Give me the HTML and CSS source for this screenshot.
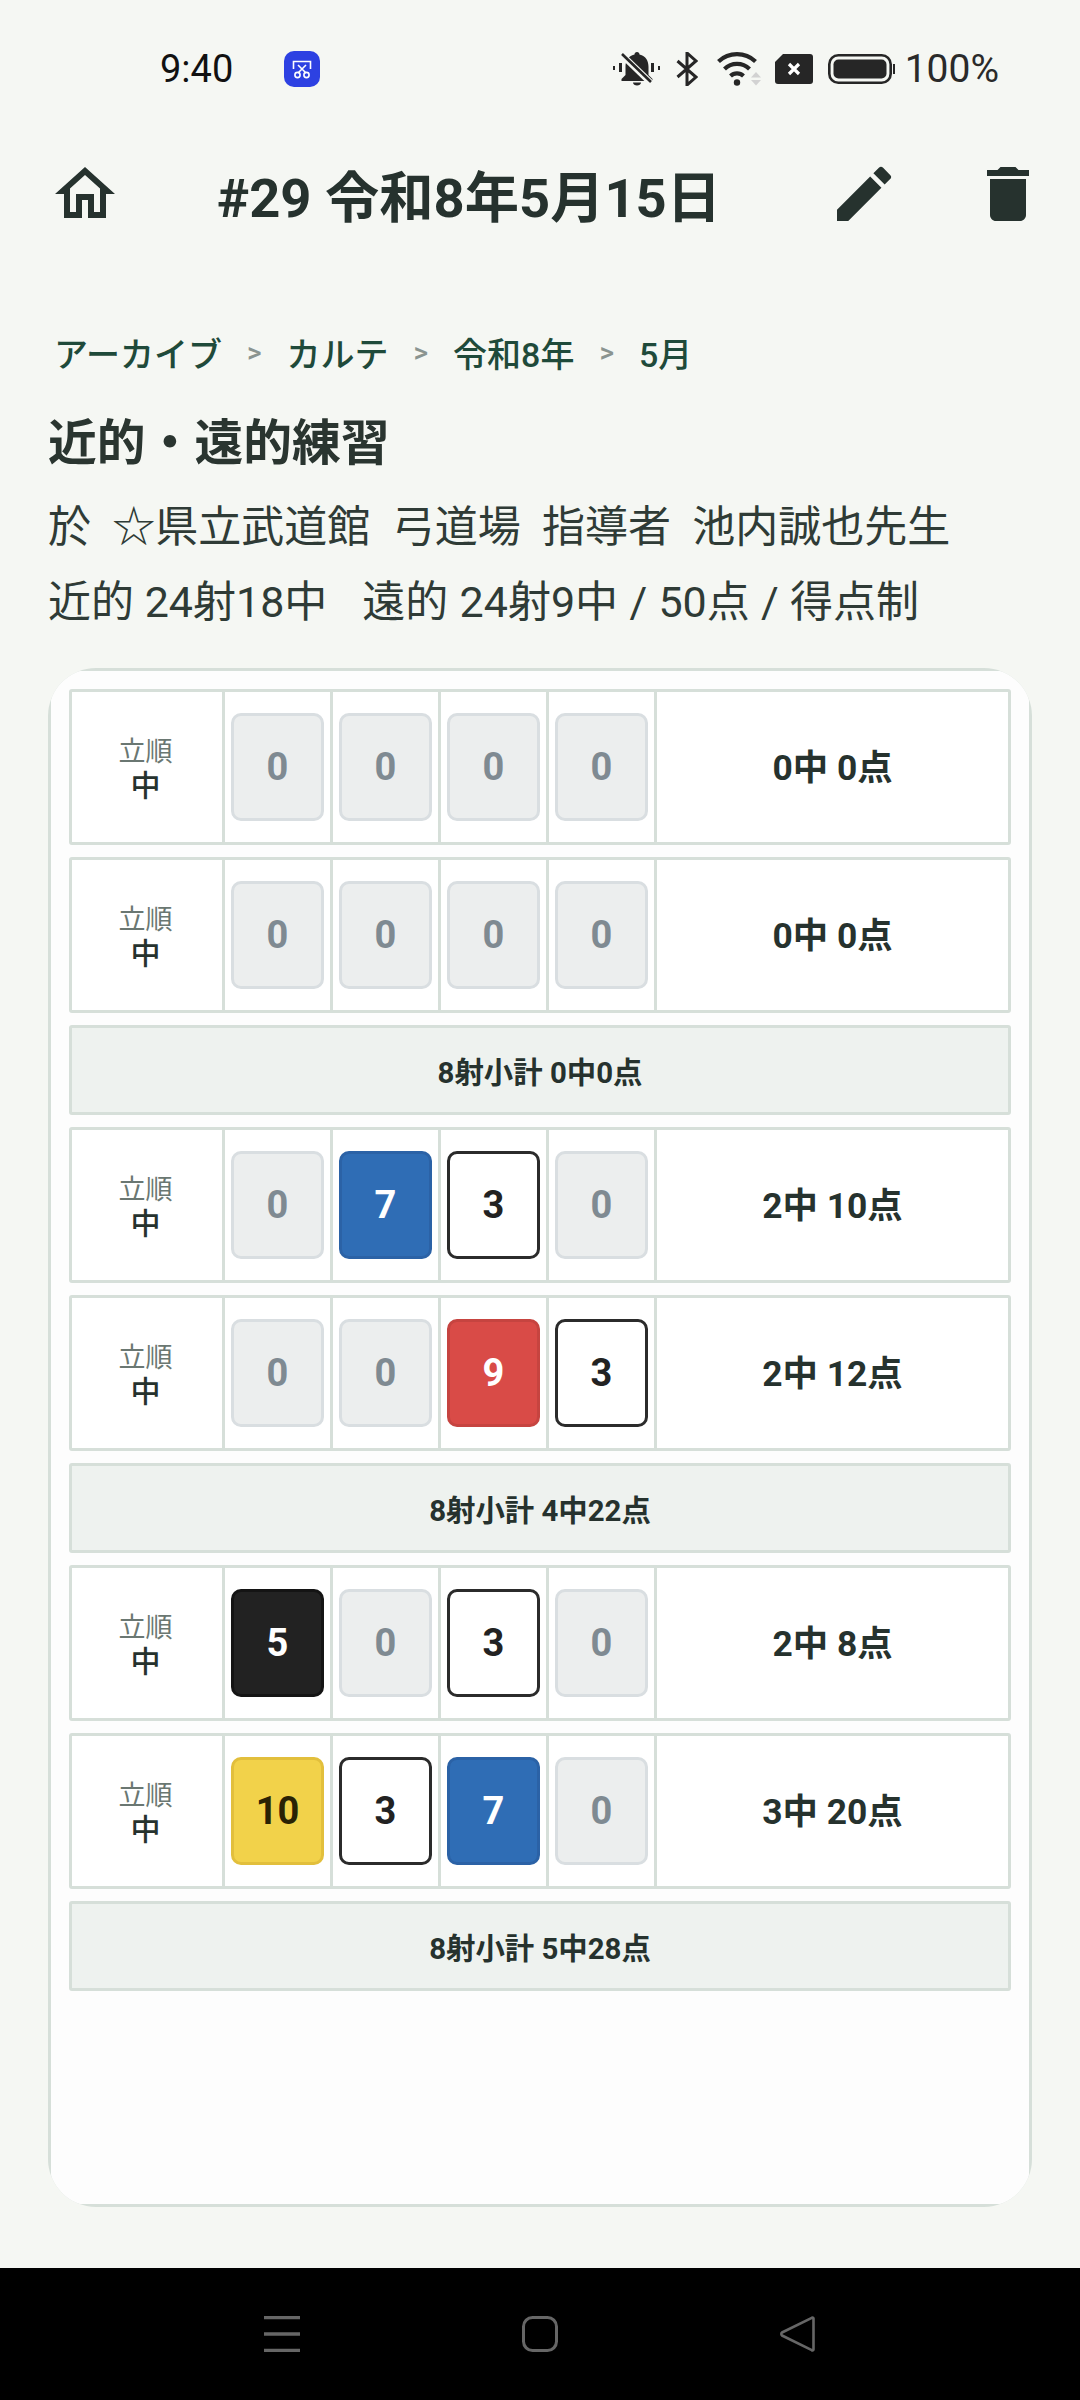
FILE: index.html
```html
<!DOCTYPE html>
<html lang="ja">
<head>
<meta charset="utf-8">
<title>#29 令和8年5月15日</title>
<link rel="stylesheet" href="styles.css">
</head>
<body>
<div class="page">
  <div class="status">
    <span class="time">9:40</span>
    <svg class="app-badge" viewBox="0 0 36 36"><rect width="36" height="36" rx="10" fill="#2d41e2"/><g fill="none" stroke="#fff" stroke-width="1.6"><path d="M9.5 18V10.5H26.5V18"/><path d="M14 14L22 22M22 14L14 22"/><circle cx="13.5" cy="24" r="2.6"/><circle cx="22.5" cy="24" r="2.6"/></g></svg>
    <div class="status-icons">
      <svg class="si-bell" viewBox="0 0 48 34"><g fill="#262626"><rect x="0" y="14" width="2" height="4"/><rect x="6" y="11" width="3" height="9"/><rect x="38" y="11" width="3" height="9"/><rect x="45" y="14" width="2" height="4"/><path d="M24 0c-1.5 0-2.5 1-2.5 2.5C15 4 12.5 9 12.5 15v8l-4 4v2h31v-2l-4-4v-8C35.5 9 33 4 26.5 2.500C26.500 1 25.500 0 24 0z"/><path d="M20 30.500h8c0 2-2 3-4 3s-4-1-4-3z"/></g><path d="M9 3L38 31" stroke="#f5f7f3" stroke-width="6.500"/><path d="M9 2L38 30" stroke="#262626" stroke-width="2.600"/></svg>
      <svg class="si-bt" viewBox="0 0 22 34"><path d="M1.500 9L20 25L11 33V1L20 9L1.500 25" fill="none" stroke="#262626" stroke-width="3"/></svg>
      <svg class="si-wifi" viewBox="0 0 46 34"><g fill="none" stroke="#262626" stroke-width="4.200"><path d="M1.500 9.500A27 27 0 0 1 38.500 9.500"/><path d="M7.500 17A18 18 0 0 1 32.500 17"/><path d="M13.500 24A9.500 9.500 0 0 1 26.500 24"/></g><circle cx="20" cy="30.500" r="3.200" fill="#262626"/><path d="M39 20L44 25.500H34z" fill="#d2d2d2"/><path d="M34 28H44L39 33.500z" fill="#d2d2d2"/></svg>
      <svg class="si-sim" viewBox="0 0 38 30"><path d="M8 0H35a3 3 0 0 1 3 3V27a3 3 0 0 1-3 3H3a3 3 0 0 1-3-3V8z" fill="#262626"/><path d="M14 10L24 20M24 10L14 20" stroke="#fff" stroke-width="3.200"/></svg>
      <svg class="si-bat" viewBox="0 0 67 30"><rect x="1.300" y="1.300" width="61.400" height="27.400" rx="9" fill="none" stroke="#262626" stroke-width="2.600"/><rect x="5.500" y="5.500" width="53" height="19" rx="5" fill="#262626"/><rect x="65" y="10" width="2" height="10" fill="#262626"/></svg>
      <span class="battery-text">100%</span>
    </div>
  </div>

  <header class="appbar">
    <svg class="bar-icon" viewBox="0 0 24 24"><path d="M12 5.690l5 4.500V18h-2v-6H9v6H7v-7.810l5-4.500M12 3L2 12h3v8h6v-6h2v6h6v-8h3L12 3z"/></svg>
    <h1 class="title">#29 令和8年5月15日</h1>
    <svg class="bar-icon" viewBox="0 0 24 24"><path d="M3 17.250V21h3.750L17.810 9.940l-3.750-3.750L3 17.250zM20.710 7.040a1 1 0 0 0 0-1.410l-2.340-2.340a1 1 0 0 0-1.410 0l-1.830 1.830 3.750 3.750 1.830-1.830z"/></svg>
    <svg class="bar-icon trash" viewBox="0 0 24 24"><path d="M6 19c0 1.100.9 2 2 2h8c1.100 0 2-.9 2-2V7H6v12zM19 4h-3.500l-1-1h-5l-1 1H5v2h14V4z"/></svg>
  </header>

  <main class="main">
    <nav class="crumbs">
      <span>アーカイブ</span><span class="sep">&gt;</span><span>カルテ</span><span class="sep">&gt;</span><span>令和8年</span><span class="sep">&gt;</span><span>5月</span>
    </nav>
    <h2 class="heading">近的・遠的練習</h2>
    <p class="meta">於&nbsp;&nbsp;☆県立武道館&nbsp;&nbsp;弓道場&nbsp;&nbsp;指導者&nbsp;&nbsp;池内誠也先生</p>
    <p class="meta">近的 24射18中&nbsp;&nbsp;&nbsp;<span class="meta-far">遠的 24射9中 / 50点 / 得点制</span></p>

    <section class="card">
      <div class="card-inner">
        <div class="row">
          <div class="label"><span class="label-top">立順</span><span class="label-main">中</span></div>
          <div class="shot"><div class="tile miss">0</div></div>
          <div class="shot"><div class="tile miss">0</div></div>
          <div class="shot"><div class="tile miss">0</div></div>
          <div class="shot"><div class="tile miss">0</div></div>
          <div class="total">0中 0点</div>
        </div>
        <div class="row">
          <div class="label"><span class="label-top">立順</span><span class="label-main">中</span></div>
          <div class="shot"><div class="tile miss">0</div></div>
          <div class="shot"><div class="tile miss">0</div></div>
          <div class="shot"><div class="tile miss">0</div></div>
          <div class="shot"><div class="tile miss">0</div></div>
          <div class="total">0中 0点</div>
        </div>
        <div class="subtotal">8射小計 0中0点</div>
        <div class="row">
          <div class="label"><span class="label-top">立順</span><span class="label-main">中</span></div>
          <div class="shot"><div class="tile miss">0</div></div>
          <div class="shot"><div class="tile blue">7</div></div>
          <div class="shot"><div class="tile white">3</div></div>
          <div class="shot"><div class="tile miss">0</div></div>
          <div class="total">2中 10点</div>
        </div>
        <div class="row">
          <div class="label"><span class="label-top">立順</span><span class="label-main">中</span></div>
          <div class="shot"><div class="tile miss">0</div></div>
          <div class="shot"><div class="tile miss">0</div></div>
          <div class="shot"><div class="tile red">9</div></div>
          <div class="shot"><div class="tile white">3</div></div>
          <div class="total">2中 12点</div>
        </div>
        <div class="subtotal">8射小計 4中22点</div>
        <div class="row">
          <div class="label"><span class="label-top">立順</span><span class="label-main">中</span></div>
          <div class="shot"><div class="tile black">5</div></div>
          <div class="shot"><div class="tile miss">0</div></div>
          <div class="shot"><div class="tile white">3</div></div>
          <div class="shot"><div class="tile miss">0</div></div>
          <div class="total">2中 8点</div>
        </div>
        <div class="row">
          <div class="label"><span class="label-top">立順</span><span class="label-main">中</span></div>
          <div class="shot"><div class="tile yellow">10</div></div>
          <div class="shot"><div class="tile white">3</div></div>
          <div class="shot"><div class="tile blue">7</div></div>
          <div class="shot"><div class="tile miss">0</div></div>
          <div class="total">3中 20点</div>
        </div>
        <div class="subtotal">8射小計 5中28点</div>
      </div>
    </section>
  </main>

  <footer class="navbar">
    <svg class="nav-icon" viewBox="0 0 36 36"><path d="M0 1.500H36M0 18H36M0 34.500H36" stroke="#666" stroke-width="3.400"/></svg>
    <svg class="nav-icon" viewBox="0 0 36 36"><rect x="1.500" y="1.500" width="33" height="33" rx="9" fill="none" stroke="#666" stroke-width="3"/></svg>
    <svg class="nav-icon" viewBox="0 0 36 36"><path d="M33.500 2.500V33.500a1 1 0 0 1-1.700.7L2 19.500a2 2 0 0 1 0-3L31.800 1.800a1 1 0 0 1 1.700.7z" fill="none" stroke="#666" stroke-width="2.600" stroke-linejoin="round"/></svg>
  </footer>
</div>
</body>
</html>
```
FILE: styles.css
```css
* { box-sizing: border-box; }
html, body { margin: 0; padding: 0; }
body {
  width: 1080px;
  height: 2400px;
  background: #f5f7f3;
  font-family: Roboto, "Noto Sans CJK JP", sans-serif;
  color: #26322e;
}
.page { display: flex; flex-direction: column; height: 2400px; }

/* status bar */
.status {
  height: 138px;
  flex: none;
  display: flex;
  align-items: center;
  padding: 0 81px 0 160px;
}
.time { font-size: 38px; color: #111; width: 74px; }
.app-badge { width: 36px; height: 36px; margin-left: 50px; }
.status-icons { display: flex; align-items: center; margin-left: auto; }
.si-bell { width: 48px; height: 34px; margin-right: 15px; }
.si-bt { width: 22px; height: 34px; margin-right: 19px; }
.si-wifi { width: 46px; height: 34px; margin-right: 12px; }
.si-sim { width: 38px; height: 30px; margin-right: 15px; }
.si-bat { width: 67px; height: 30px; margin-right: 10px; }
.battery-text { font-size: 39px; color: #2a2a2a; }

/* app bar */
.appbar {
  height: 112px;
  flex: none;
  display: flex;
  align-items: center;
  padding: 0 36px 0 49px;
}
.bar-icon { width: 72px; height: 72px; flex: none; fill: #26322e; }
.trash { margin-left: 72px; }
.title {
  flex: 1;
  margin: 10px 0 0;
  padding-left: 96px;
  font-size: 54.3px;
  line-height: 72px;
  font-weight: 700;
  color: #26322e;
}

/* main */
.main {
  flex: 1;
  min-height: 0;
  display: flex;
  flex-direction: column;
  padding: 0 48px 61px;
}
.crumbs {
  display: flex;
  align-items: center;
  gap: 25px;
  margin-top: 78px;
  padding-left: 6px;
  height: 48px;
  font-size: 34px;
  font-weight: 500;
  color: #1f4a3a;
}
.sep { font-size: 28px; font-weight: 500; color: #8a9490; }
.heading {
  margin: 32px 0 0;
  font-size: 48.8px;
  line-height: 72px;
  font-weight: 700;
  color: #2a3530;
}
.meta {
  margin: 0;
  font-size: 43px;
  line-height: 75px;
  color: #2f3b36;
}
.meta-far { margin-left: 3px; word-spacing: 0.6px; }
.heading + .meta { margin-top: 10px; }
.meta + .meta { margin-bottom: 28px; }

/* card */
.card {
  flex: 1;
  min-height: 0;
  display: flex;
  padding: 3px;
  background: #d6dfd9;
  border-radius: 48px;
  overflow: hidden;
}
.card-inner {
  flex: 1;
  display: flex;
  flex-direction: column;
  gap: 12px;
  padding: 18px;
  background: #fdfdfd;
  border-radius: 30px;
}
.row {
  height: 156px;
  flex: none;
  display: flex;
  background: #fff;
  border: 3px solid #d6dfd9;
  border-radius: 3px;
}
.label {
  width: 153px;
  flex: none;
  display: flex;
  flex-direction: column;
  align-items: center;
  justify-content: center;
  border-right: 3px solid #d6dfd9;
  padding: 3px 3px 0 0;
}
.label-top { font-size: 27px; line-height: 34px; color: #6a7772; }
.label-main { font-size: 30px; line-height: 33px; font-weight: 500; color: #26322e; }
.shot {
  width: 108px;
  flex: none;
  display: flex;
  align-items: center;
  padding: 0 6px;
  border-right: 3px solid #d6dfd9;
}
.tile {
  flex: 1;
  height: 108px;
  display: flex;
  align-items: center;
  justify-content: center;
  border: 3px solid;
  border-radius: 10px;
  font-size: 38px;
  font-weight: 700;
}
.miss { background: #eceeee; border-color: #d9dee1; color: #7f8a92; }
.white { background: #fff; border-color: #2b2b2b; color: #222; }
.blue { background: #2f6db5; border-color: #2b62a6; color: #fff; }
.red { background: #d94b47; border-color: #c64440; color: #fff; }
.black { background: #222; border-color: #141414; color: #fff; }
.yellow { background: #f2d24a; border-color: #e2bf3c; color: #2a2204; }
.total {
  flex: 1;
  display: flex;
  align-items: center;
  justify-content: center;
  padding-bottom: 6px;
  font-size: 35.4px;
  font-weight: 700;
  color: #26322e;
}
.subtotal {
  height: 90px;
  flex: none;
  display: flex;
  align-items: center;
  justify-content: center;
  background: #eef2ef;
  border: 3px solid #d6dfd9;
  border-radius: 3px;
  font-size: 29.4px;
  font-weight: 700;
  color: #26322e;
}

/* navigation bar */
.navbar {
  height: 132px;
  flex: none;
  display: flex;
  align-items: center;
  justify-content: center;
  gap: 222px;
  background: #000;
}
.nav-icon { width: 36px; height: 36px; }
```
